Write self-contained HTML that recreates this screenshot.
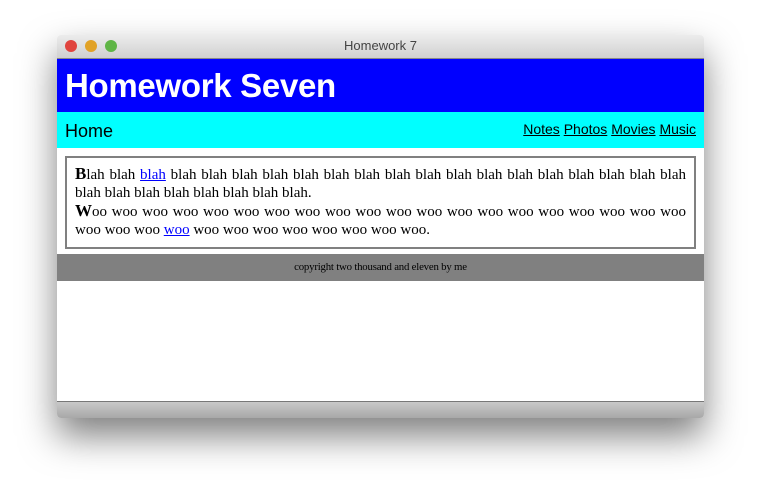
<!DOCTYPE html>
<html><head><style>
body{margin:0;width:761px;height:497px;background:#fff;position:relative;overflow:hidden;font-family:"Liberation Serif",serif}
.win{position:absolute;left:57px;top:35px;width:647px;height:383px;box-shadow:0 18px 36px rgba(0,0,0,.5);border-radius:4px;background:#fff;overflow:hidden}
.tb{height:23px;background:linear-gradient(#ececec,#d0d0d0);border-bottom:1px solid #888;text-align:center;font:13px "Liberation Sans",sans-serif;color:#444;line-height:22px;position:relative}
.dot{position:absolute;top:5px;width:12px;height:12px;border-radius:50%}
.hd{height:53px;background:#00f;color:#fff;font:bold 33px "Liberation Sans",sans-serif;line-height:53px;padding-left:8px;letter-spacing:-0.3px}
.nav{height:36px;background:#0ff;font:18px "Liberation Sans",sans-serif;line-height:38px;padding:0 8px;position:relative}
.nav span{position:absolute;right:8px;top:-2px;font-size:14px}
.nav a{color:#000}
.box{position:absolute;left:8px;top:121px;width:611px;height:77px;border:2px solid #808080;padding:7px 8px 5px;font-size:15px;line-height:17.5px;text-align:justify}
.box b{font-size:17px}
a{color:#00f}
.ft{position:absolute;left:0;top:219px;width:647px;height:27px;background:#808080;text-align:center;font-size:10.8px;line-height:27px;letter-spacing:-0.2px}
.bb{position:absolute;left:0;bottom:0;width:647px;height:16px;background:linear-gradient(#c8c8c8,#a8a8a8);border-top:1px solid #777}
</style></head><body>
<div class="win">
<div class="tb"><div class="dot" style="left:8px;background:#e0443e"></div><div class="dot" style="left:28px;background:#e1a226"></div><div class="dot" style="left:48px;background:#5fb546"></div>Homework 7</div>
<div class="hd">Homework Seven</div>
<div class="nav">Home<span><a href="#">Notes</a> <a href="#">Photos</a> <a href="#">Movies</a> <a href="#">Music</a></span></div>
<div class="box"><b>B</b>lah blah <a href="#">blah</a> blah blah blah blah blah blah blah blah blah blah blah blah blah blah blah blah blah blah blah blah blah blah blah blah blah.<br><b>W</b>oo woo woo woo woo woo woo woo woo woo woo woo woo woo woo woo woo woo woo woo woo woo woo <a href="#">woo</a> woo woo woo woo woo woo woo woo.</div>
<div class="ft">copyright two thousand and eleven by me</div>
<div class="bb"></div>
</div>
</body></html>
